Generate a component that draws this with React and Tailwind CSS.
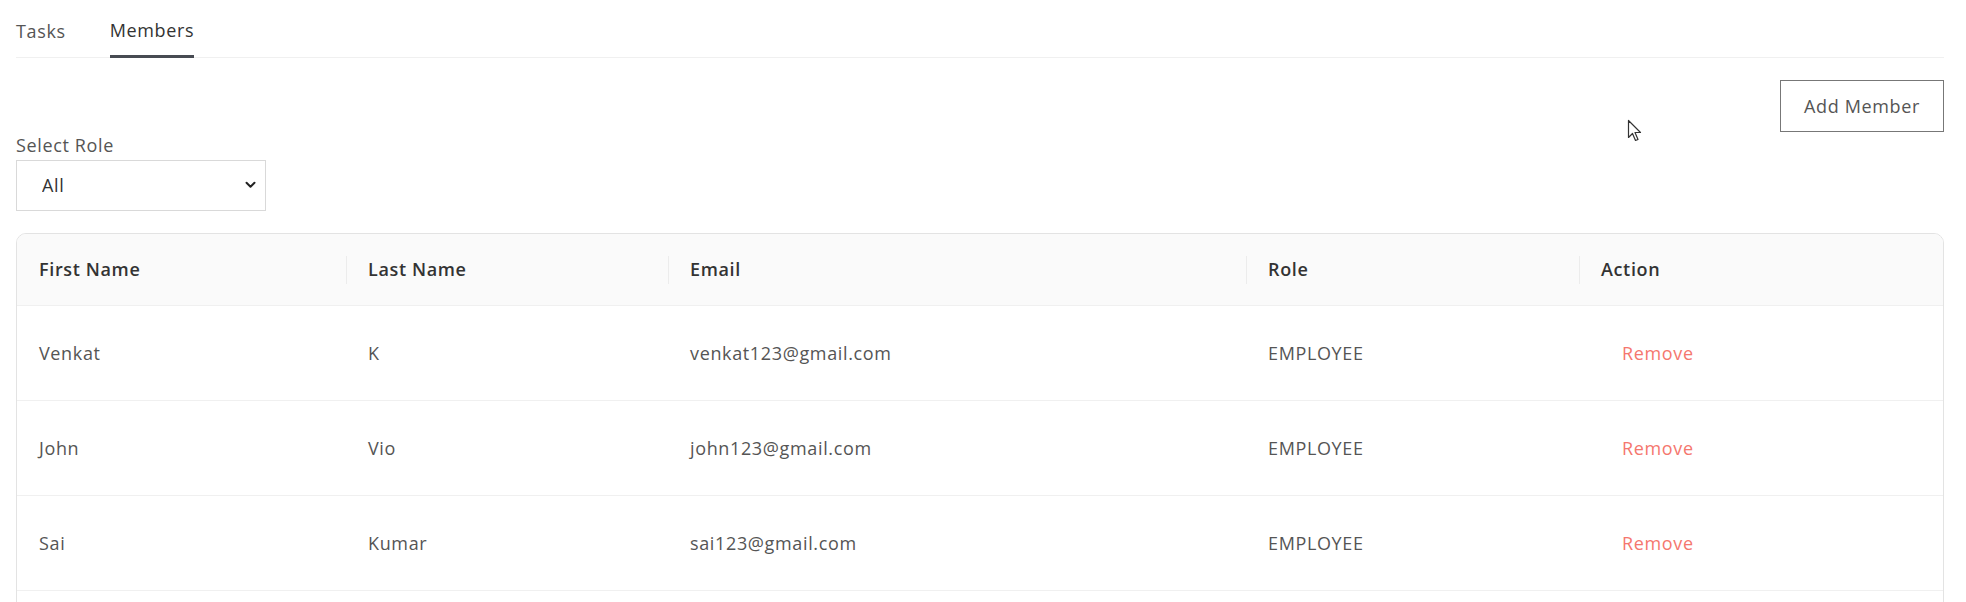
import React, { useState } from 'react'

const members = [
  { first: 'Venkat', last: 'K', email: 'venkat123@gmail.com', role: 'EMPLOYEE' },
  { first: 'John', last: 'Vio', email: 'john123@gmail.com', role: 'EMPLOYEE' },
  { first: 'Sai', last: 'Kumar', email: 'sai123@gmail.com', role: 'EMPLOYEE' },
]

const columns = ['First Name', 'Last Name', 'Email', 'Role', 'Action']

function Cursor() {
  return (
    <svg className="absolute left-[1627px] top-[119px]" width="18" height="24" viewBox="0 0 18 24">
      <path d="M1.5 1.5 L1.5 18.5 L5.5 14.5 L8.5 21.5 L11 20.5 L8 13.5 L13.5 13.5 Z" fill="#fff" stroke="#333" strokeWidth="1.2" strokeLinejoin="round" />
    </svg>
  )
}

export default function App() {
  const [tab, setTab] = useState('members')
  const [role, setRole] = useState('All')

  return (
    <div className="relative h-[602px] overflow-hidden bg-white pl-4 pr-[22px] text-[#555] tracking-[0.04em]" style={{ fontFamily: '"Open Sans", "Noto Sans", sans-serif' }}>
      {/* Tabs */}
      <div className="flex gap-[44px] border-b border-[#f0f0f0] h-[58px]">
        <button
          onClick={() => setTab('tasks')}
          className={`text-[18px] pt-[5px] h-[58px] ${tab === 'tasks' ? 'text-[#333] border-b-[3px] border-[#474b52]' : 'text-[#555]'}`}
        >
          Tasks
        </button>
        <button
          onClick={() => setTab('members')}
          className={`text-[18px] pt-[5px] h-[58px] ${tab === 'members' ? 'text-[#333] border-b-[3px] border-[#474b52]' : 'text-[#555]'}`}
        >
          Members
        </button>
      </div>

      {/* Toolbar */}
      <div className="flex justify-end mt-[22px]">
        <button className="w-[164px] h-[52px] border border-[#777] text-[18px] text-[#555] bg-white">
          Add Member
        </button>
      </div>

      <div className="mt-[2px] w-[250px]">
        <label className="block text-[18px] text-[#555] leading-[22px]">Select Role</label>
        <div className="relative mt-[4px]">
          <select
            value={role}
            onChange={(e) => setRole(e.target.value)}
            className="appearance-none w-[250px] h-[51px] border border-[#d9d9d9] bg-white pl-[25px] text-[18px] text-[#333] outline-none"
          >
            <option>All</option>
            <option>EMPLOYEE</option>
            <option>MANAGER</option>
          </select>
          <svg className="pointer-events-none absolute right-[10px] top-[21px]" width="11" height="8" viewBox="0 0 11 8">
            <path d="M1.5 1.8 L5.5 5.8 L9.5 1.8" fill="none" stroke="#222" strokeWidth="2" strokeLinecap="round" strokeLinejoin="round" />
          </svg>
        </div>
      </div>

      {/* Table */}
      <div className="mt-[22px] border border-[#e3e3e3] rounded-[10px] overflow-hidden">
        <div className="grid grid-cols-[329px_322px_578px_333px_1fr] bg-[#fafafa] h-[72px] border-b border-[#f0f0f0]">
          {columns.map((col, i) => (
            <div key={col} className="flex items-center">
              {i > 0 && <span className="w-px h-[28px] bg-[#ececec]" />}
              <span className={`text-[18px] font-semibold text-[#333] ${i > 0 ? 'pl-[21px]' : 'pl-[22px]'}`}>{col}</span>
            </div>
          ))}
        </div>
        {members.map((m) => (
          <div key={m.email} className="grid grid-cols-[329px_322px_578px_333px_1fr] h-[95px] border-b border-[#f0f0f0] text-[18px] text-[#555]">
            <div className="flex items-center pl-[22px]">{m.first}</div>
            <div className="flex items-center pl-[22px]">{m.last}</div>
            <div className="flex items-center pl-[22px]">{m.email}</div>
            <div className="flex items-center pl-[22px]">{m.role}</div>
            <div className="flex items-center pl-[43px]">
              <button className="text-[#f5776e]">Remove</button>
            </div>
          </div>
        ))}
        <div className="h-[60px]" />
      </div>

      <Cursor />
    </div>
  )
}
